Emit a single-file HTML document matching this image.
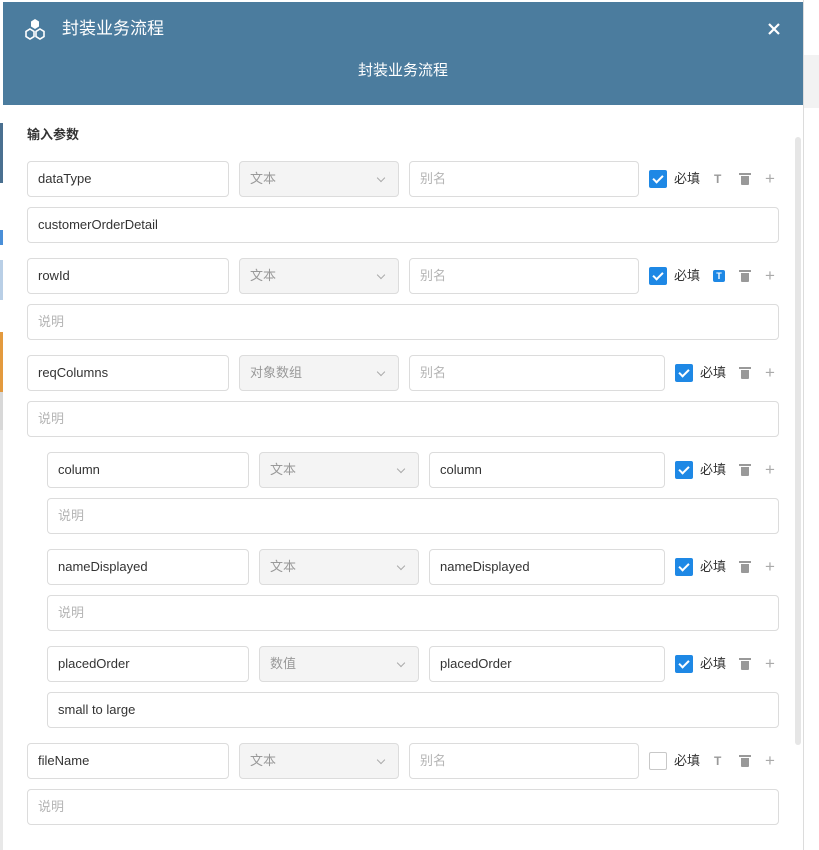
<!DOCTYPE html>
<html><head><meta charset="utf-8"><style>
*{box-sizing:border-box;margin:0;padding:0}
body{width:819px;height:850px;position:relative;overflow:hidden;background:#fff;font-family:"Liberation Sans","Noto Sans CJK SC",sans-serif;font-size:13px;color:#333}
.a{position:absolute}
.in{position:absolute;height:36px;border:1px solid #dcdcdc;border-radius:4px;background:#fff;padding-left:10px;line-height:34px;font-size:13px;color:#333}
.ph{color:#b4b4b4}
.sel{background:#f4f4f4;color:#999}
.sel:after{content:"";position:absolute;right:14px;top:13px;width:5px;height:5px;border-right:1px solid #aaa;border-bottom:1px solid #aaa;transform:rotate(45deg)}
.cb{position:absolute;width:18px;height:18px;border-radius:2px;background:#1e88e5}
.cb:after{content:"";position:absolute;left:6px;top:3px;width:4px;height:8px;border-right:2px solid #fff;border-bottom:2px solid #fff;transform:rotate(45deg)}
.cb.off{background:#fff;border:1px solid #c8c8c8}
.cb.off:after{display:none}
.lb{position:absolute;font-size:13px;color:#333;line-height:18px}
.t{position:absolute;font-size:12px;font-weight:bold;color:#999;line-height:18px}
.tb{position:absolute;width:12px;height:12px;background:#1e88e5;border-radius:2px;color:#fff;font-size:9px;font-weight:bold;text-align:center;line-height:12px}
.tr{position:absolute;width:10px;height:12px}
.tr:before{content:"";position:absolute;left:-1px;top:0;width:12px;height:2px;background:#999}
.tr:after{content:"";position:absolute;left:1px;top:3px;width:8px;height:9px;background:#999;border-radius:0 0 1px 1px}
.pl{position:absolute;font-size:17px;color:#aaa;line-height:18px}
</style></head><body>
<div class="a" style="left:0;top:123px;width:3px;height:60px;background:#4a7090"></div>
<div class="a" style="left:0;top:230px;width:3px;height:15px;background:#4a8fd8"></div>
<div class="a" style="left:0;top:260px;width:3px;height:40px;background:#b9cfe6"></div>
<div class="a" style="left:0;top:332px;width:3px;height:60px;background:#e39a3e"></div>
<div class="a" style="left:0;top:392px;width:3px;height:40px;background:#d8d8d8"></div>
<div class="a" style="left:0;top:430px;width:3px;height:420px;background:#e8e8e8"></div>
<div class="a" style="left:803px;top:0;width:16px;height:850px;background:#fff;border-left:1px solid #dcdcdc"></div>
<div class="a" style="left:804px;top:55px;width:15px;height:53px;background:#f2f2f2"></div>
<div class="a" style="left:3px;top:2px;width:800px;height:103px;background:#4b7c9e"></div>
<svg class="a" style="left:24px;top:18px" width="22" height="22" viewBox="0 0 22 22"><polygon points="11,1 15,3.5 15,8.5 11,11 7,8.5 7,3.5" fill="#fff"/><polygon points="6,11 10,13.5 10,18.5 6,21 2,18.5 2,13.5" fill="none" stroke="#fff" stroke-width="1.6"/><polygon points="16,11 20,13.5 20,18.5 16,21 12,18.5 12,13.5" fill="none" stroke="#fff" stroke-width="1.6"/></svg>
<div class="a" style="left:62px;top:18px;font-size:17px;color:#fff;line-height:22px">封装业务流程</div>
<svg class="a" style="left:768px;top:23px" width="12" height="12" viewBox="0 0 12 12"><path d="M1 1L11 11M11 1L1 11" stroke="#fff" stroke-width="2.2"/></svg>
<div class="a" style="left:3px;top:60px;width:800px;text-align:center;font-size:15px;color:#fff;line-height:22px">封装业务流程</div>
<div class="a" style="left:795px;top:137px;width:6px;height:608px;background:#e6e6e6;border-radius:3px"></div>
<div class="a" style="left:27px;top:126px;font-size:13px;font-weight:bold;color:#333;line-height:18px">输入参数</div>

<div class="in" style="left:27px;top:161px;width:202px">dataType</div>
<div class="in sel" style="left:239px;top:161px;width:160px">文本</div>
<div class="in ph" style="left:409px;top:161px;width:230px">别名</div>
<div class="cb" style="left:649px;top:170px"></div><div class="lb" style="left:674px;top:170px">必填</div>
<div class="t" style="left:714px;top:170px">T</div><div class="tr" style="left:740px;top:173px"></div><div class="pl" style="left:765px;top:170px">+</div>
<div class="in" style="left:27px;top:207px;width:752px">customerOrderDetail</div>

<div class="in" style="left:27px;top:258px;width:202px">rowId</div>
<div class="in sel" style="left:239px;top:258px;width:160px">文本</div>
<div class="in ph" style="left:409px;top:258px;width:230px">别名</div>
<div class="cb" style="left:649px;top:267px"></div><div class="lb" style="left:674px;top:267px">必填</div>
<div class="tb" style="left:713px;top:270px">T</div><div class="tr" style="left:740px;top:270px"></div><div class="pl" style="left:765px;top:267px">+</div>
<div class="in ph" style="left:27px;top:304px;width:752px">说明</div>

<div class="in" style="left:27px;top:355px;width:202px">reqColumns</div>
<div class="in sel" style="left:239px;top:355px;width:160px">对象数组</div>
<div class="in ph" style="left:409px;top:355px;width:256px">别名</div>
<div class="cb" style="left:675px;top:364px"></div><div class="lb" style="left:700px;top:364px">必填</div>
<div class="tr" style="left:740px;top:367px"></div><div class="pl" style="left:765px;top:364px">+</div>
<div class="in ph" style="left:27px;top:401px;width:752px">说明</div>

<div class="in" style="left:47px;top:452px;width:202px">column</div>
<div class="in sel" style="left:259px;top:452px;width:160px">文本</div>
<div class="in" style="left:429px;top:452px;width:236px">column</div>
<div class="cb" style="left:675px;top:461px"></div><div class="lb" style="left:700px;top:461px">必填</div>
<div class="tr" style="left:740px;top:464px"></div><div class="pl" style="left:765px;top:461px">+</div>
<div class="in ph" style="left:47px;top:498px;width:732px">说明</div>

<div class="in" style="left:47px;top:549px;width:202px">nameDisplayed</div>
<div class="in sel" style="left:259px;top:549px;width:160px">文本</div>
<div class="in" style="left:429px;top:549px;width:236px">nameDisplayed</div>
<div class="cb" style="left:675px;top:558px"></div><div class="lb" style="left:700px;top:558px">必填</div>
<div class="tr" style="left:740px;top:561px"></div><div class="pl" style="left:765px;top:558px">+</div>
<div class="in ph" style="left:47px;top:595px;width:732px">说明</div>

<div class="in" style="left:47px;top:646px;width:202px">placedOrder</div>
<div class="in sel" style="left:259px;top:646px;width:160px">数值</div>
<div class="in" style="left:429px;top:646px;width:236px">placedOrder</div>
<div class="cb" style="left:675px;top:655px"></div><div class="lb" style="left:700px;top:655px">必填</div>
<div class="tr" style="left:740px;top:658px"></div><div class="pl" style="left:765px;top:655px">+</div>
<div class="in" style="left:47px;top:692px;width:732px">small to large</div>

<div class="in" style="left:27px;top:743px;width:202px">fileName</div>
<div class="in sel" style="left:239px;top:743px;width:160px">文本</div>
<div class="in ph" style="left:409px;top:743px;width:230px">别名</div>
<div class="cb off" style="left:649px;top:752px"></div><div class="lb" style="left:674px;top:752px">必填</div>
<div class="t" style="left:714px;top:752px">T</div><div class="tr" style="left:740px;top:755px"></div><div class="pl" style="left:765px;top:752px">+</div>
<div class="in ph" style="left:27px;top:789px;width:752px">说明</div>
</body></html>
